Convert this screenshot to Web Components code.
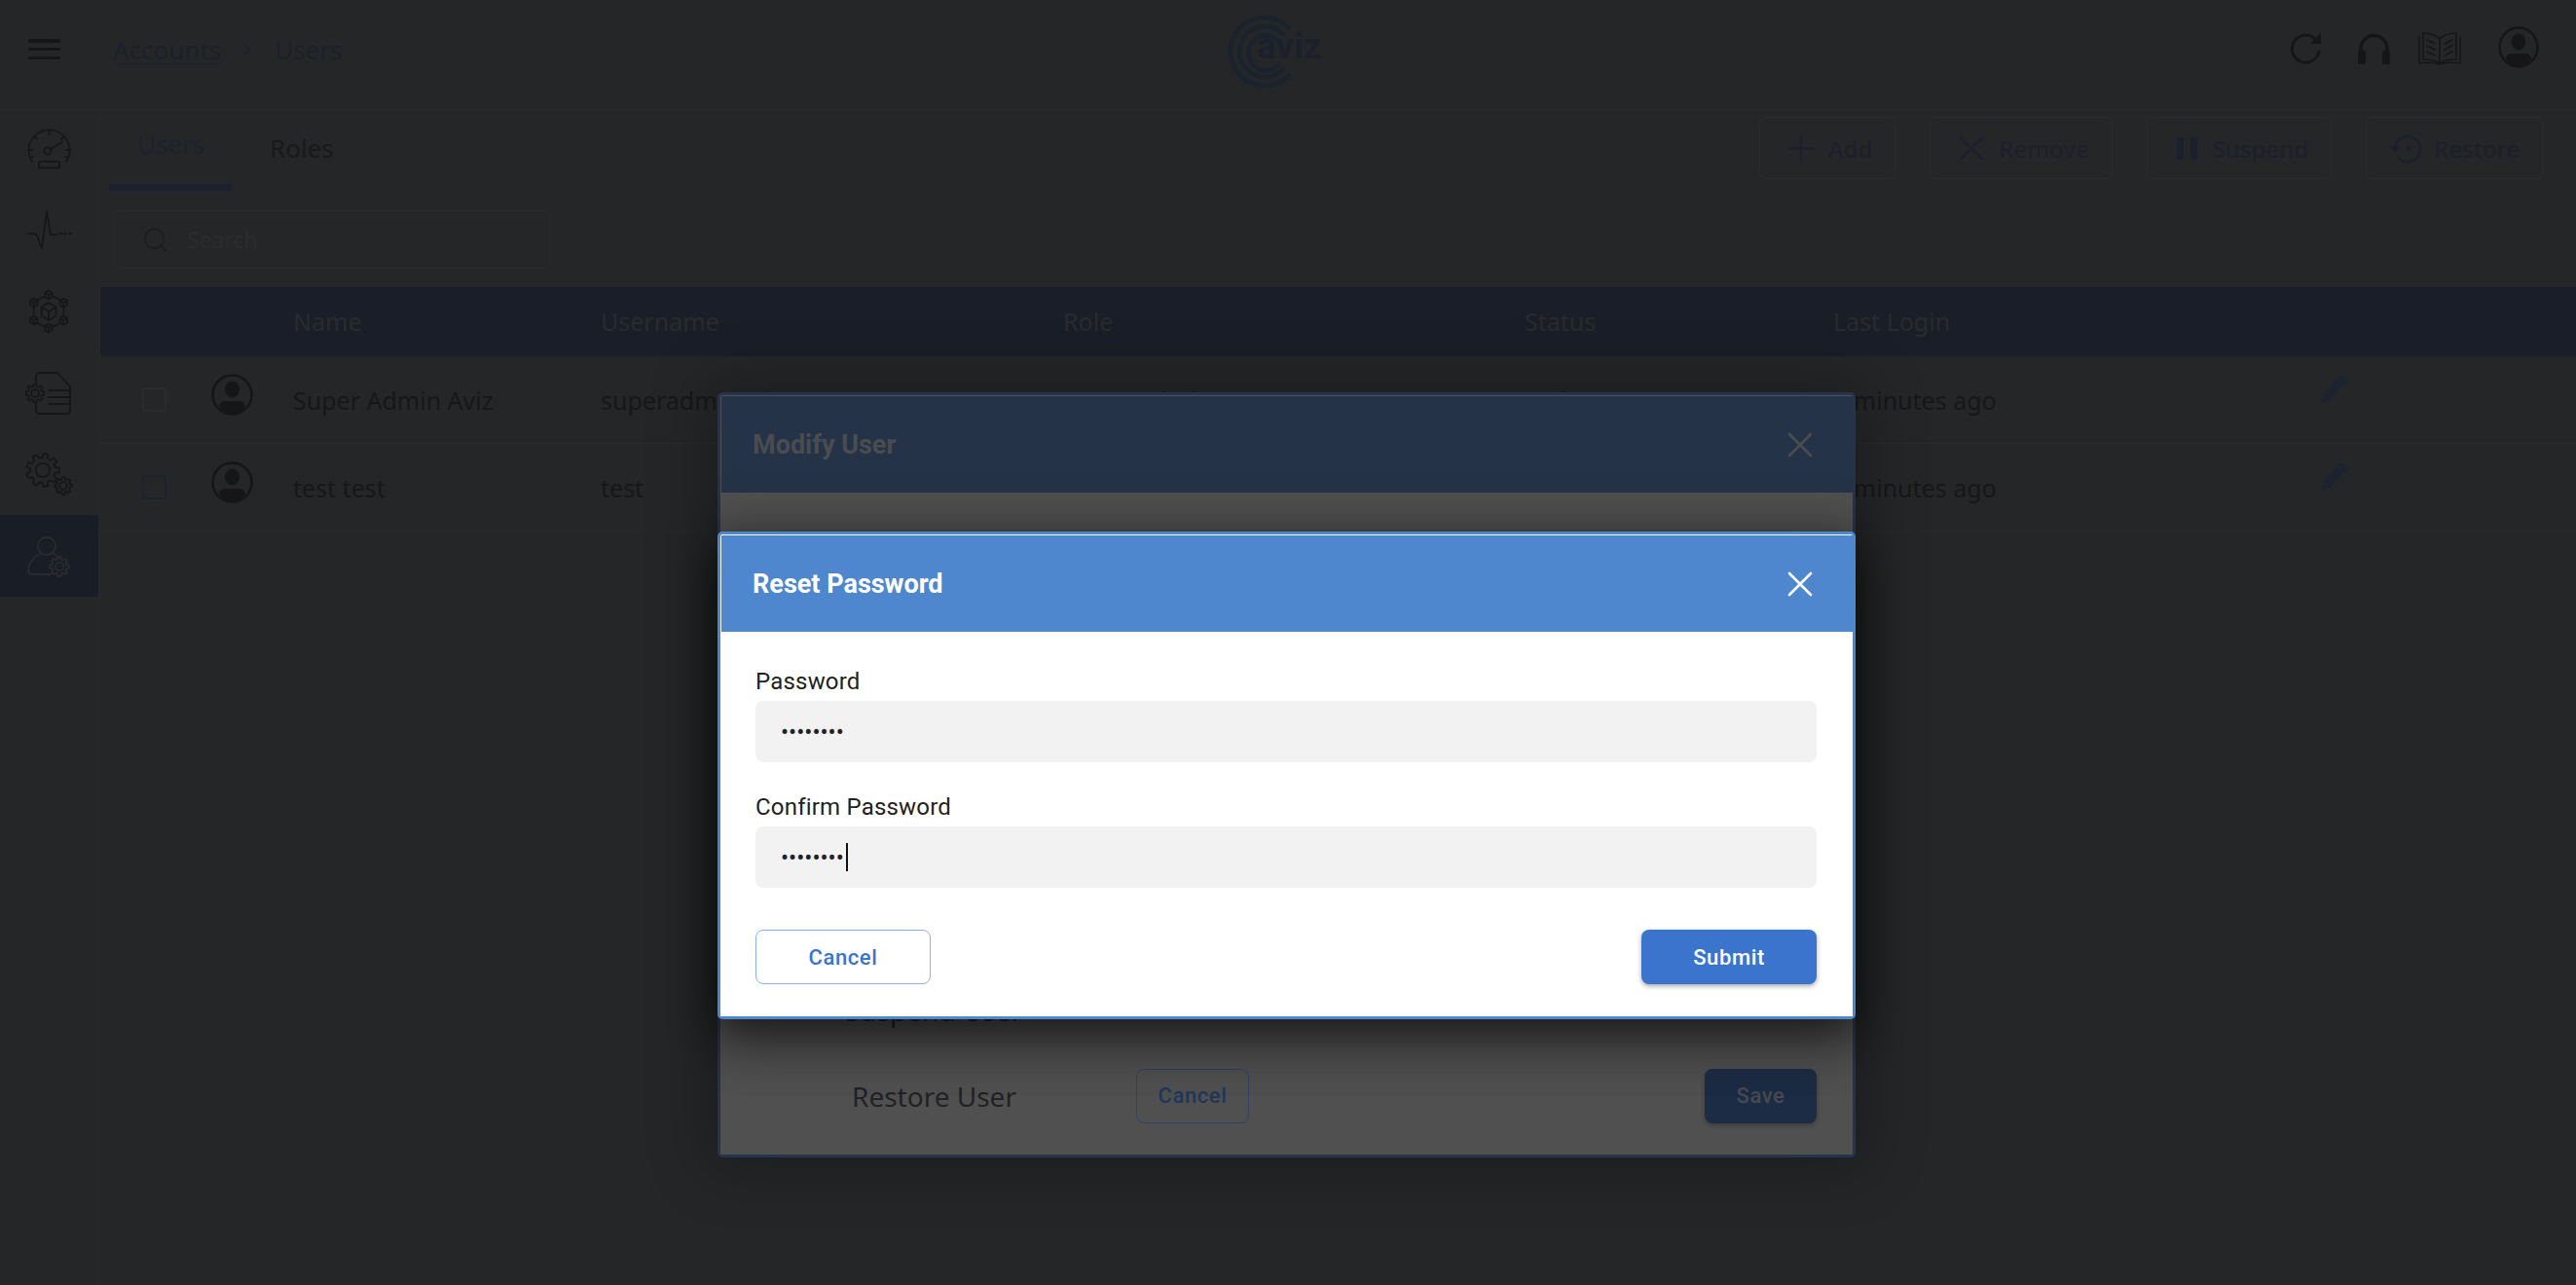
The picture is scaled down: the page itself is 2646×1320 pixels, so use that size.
<!DOCTYPE html>
<html lang="en">
<head>
<meta charset="utf-8">
<title>Accounts / Users</title>
<style>
  html, body { margin: 0; height: 100%; background: #252627; overflow: hidden; }
</style>
</head>
<body>
<app-shell>
  <app-topbar slot="top"></app-topbar>
  <app-sidebar slot="side"></app-sidebar>
  <users-page slot="main"></users-page>
</app-shell>

<!-- first dialog, sitting under the second backdrop -->
<app-modal top="403" dim>
  <span slot="title">Modify User</span>
  <modify-user-form></modify-user-form>
</app-modal>

<app-modal top="546">
  <span slot="title">Reset Password</span>
  <reset-password-form></reset-password-form>
</app-modal>

<script>
// ---- icons ----
const gearPath = (cx, cy, R, r, n) => {
  let pts = [];
  const step = (Math.PI * 2) / n;
  for (let i = 0; i < n; i++) {
    const a = i * step;
    [[-0.32, r], [-0.2, R], [0.2, R], [0.32, r]].forEach(([k, rad]) => {
      const t = a + k * step;
      pts.push(`${(cx + rad * Math.cos(t)).toFixed(2)} ${(cy + rad * Math.sin(t)).toFixed(2)}`);
    });
  }
  return `M${pts.join("L")}Z`;
};
const gear = (cx, cy, R, n = 8) =>
  `<path d="${gearPath(cx, cy, R, R * 0.76, n)}"/><circle cx="${cx}" cy="${cy}" r="${R * 0.42}"/>`;
const cube = (cx, cy, r) => {
  const x = r * 0.87, y = r * 0.5;
  return `<path d="M${cx} ${cy - r}l${x} ${y}v${r}l${-x} ${y}l${-x} ${-y}v${-r}zM${cx - x} ${cy - y}l${x} ${y}l${x} ${-y}M${cx} ${cy}v${r}"/>`;
};

const ICONS = {
  gauge: ["0 0 45 40", `<path d="M5 33A21 21 0 1 1 40 33"/><path d="M22.5 1v4M7 7l3 3M38 7l-3 3M1 21h4M44 21h-4M3 29l3-1M42 29l-3-1"/><circle cx="21" cy="22" r="3.5"/><path d="M24 20l12-7"/><rect x="12" y="33" width="21" height="6.5" rx="1"/>`],
  pulse: ["0 0 45 41", `<path d="M0 24h7l3 2 5 13 5-38 4 24h6"/><path d="M33 24h3M38 24h2M43 24h2"/>`],
  network: ["0 0 44 44", `${cube(22, 22, 9)}${cube(22, 5, 4.5)}${cube(22, 39, 4.5)}${cube(6, 13, 4.5)}${cube(38, 13, 4.5)}${cube(6, 31, 4.5)}${cube(38, 31, 4.5)}<path d="M10 10l8-4M34 10l-8-4M6 18v8M38 18v8M10 34l8 4M34 34l-8 4"/>`],
  filegear: ["0 0 48 44", `<path d="M11 11V5q0-4 4-4h18l13 14v25q0 3-3 3H16q-4 0-5-3v-7"/><path d="M24 19h21M24 26h21M24 33h21"/>${gear(10, 22, 9.5)}`],
  gears: ["0 0 48 43", `${gear(18, 18, 17, 9)}${gear(39, 34, 9)}`],
  usergear: ["0 0 44 42", `<circle cx="20" cy="10" r="9"/><path d="M13 18c-8 4-12 11-12 17 0 3 2 4 4 4h19M27 18c2 1 4 2 5 4"/>${gear(33, 31, 10)}`],
  refresh: ["0 0 33 33", `<path d="M29 20a14 14 0 1 1-4-13" stroke-width="3"/><path d="M31 0v12H20z" fill="currentColor" stroke="none"/>`],
  phones: ["0 0 33 32", `<path d="M3 22v-6a13.5 13.5 0 0 1 27 0v6" stroke-width="3.5"/><rect x="0" y="18" width="8" height="14" rx="2" fill="currentColor" stroke="none"/><rect x="25" y="18" width="8" height="14" rx="2" fill="currentColor" stroke="none"/>`],
  book: ["0 0 44 34", `<path d="M22 7C17 2 11 1 5 1v27c7 0 13 1 17 4 4-3 10-4 17-4V1c-6 0-12 1-17 6v25"/><path d="M1 5v27c8-1 15-1 21 1 6-2 13-2 21-1V5"/><path d="M9 8l8 4M9 14l8 4M9 20l8 4M35 8l-8 4M35 14l-8 4M35 20l-8 4"/>`],
  avatar: ["0 0 43 43", `<circle cx="21.5" cy="21.5" r="20" stroke-width="2.6"/><ellipse cx="21.5" cy="16" rx="7.5" ry="8.5" fill="currentColor" stroke="none"/><path d="M8 33q1-5 7-5h13q6 0 7 5-5 8-13.5 8T8 33z" fill="currentColor" stroke="none"/>`],
  pencil: ["0 0 29 28", `<path d="M0 28l2-8L16 3l7 5L9 25z" fill="currentColor" stroke="none"/><path d="M18 1.5q2-2 4.5-1t5 3.500q1.500 2-.5 4.500l-2 2z" fill="currentColor" stroke="none"/>`],
  plus: ["0 0 24 24", `<path d="M12 0v24M0 12h24" stroke-width="2.4"/>`],
  close: ["0 0 24 24", `<path d="M1 1l22 22M23 1L1 23" stroke-width="2.6"/>`],
  pause: ["0 0 21 23", `<rect x="0" width="7" height="23" fill="currentColor" stroke="none"/><rect x="14" width="7" height="23" fill="currentColor" stroke="none"/>`],
  restore: ["0 0 34 29", `<path d="M6 14.500a13 13 0 1 1 4 10" stroke-width="2.6"/><path d="M0 12h12l-6 7z" fill="currentColor" stroke="none"/><circle cx="20" cy="14.500" r="2.500" fill="currentColor" stroke="none"/>`],
  search: ["0 0 24 24", `<circle cx="11" cy="11" r="10"/><path d="M19 19l4 5"/>`],
  chevron: ["0 0 10 12", `<path d="M2 1l5 5-5 5"/>`],
  doc: ["0 0 40 50", `<path d="M1 49V1h26l12 12v36z"/><path d="M27 1v12h12"/>`],
};

class AppIcon extends HTMLElement {
  connectedCallback() {
    const [box, body] = ICONS[this.getAttribute("name")];
    const w = this.getAttribute("w") || 24;
    const h = this.getAttribute("h") || w;
    const sw = this.getAttribute("sw") || 2;
    this.attachShadow({ mode: "open" }).innerHTML = `
      <style>
        :host { display: block; width: ${w}px; height: ${h}px; flex: none; }
        svg { display: block; width: 100%; height: 100%; overflow: visible; }
      </style>
      <svg viewBox="${box}" preserveAspectRatio="none" fill="none" stroke="currentColor"
        stroke-width="${sw}" stroke-linecap="round" stroke-linejoin="round">${body}</svg>`;
  }
}
customElements.define("app-icon", AppIcon);

// ---- page frame ----
class AppShell extends HTMLElement {
  constructor() {
    super();
    this.attachShadow({ mode: "open" }).innerHTML = `
      <style>
        :host {
          display: grid;
          grid-template-columns: 103px 1fr;
          grid-template-rows: 113px 1fr;
          height: 100vh;
          font-family: "Noto Sans", sans-serif;
        }
        ::slotted([slot="top"]) { grid-column: 1 / 3; }
      </style>
      <slot name="top"></slot>
      <slot name="side"></slot>
      <slot name="main"></slot>`;
  }
}
customElements.define("app-shell", AppShell);

class AppTopbar extends HTMLElement {
  constructor() {
    super();
    this.attachShadow({ mode: "open" }).innerHTML = `
      <style>
        :host {
          display: grid;
          grid-template-columns: 1fr auto 1fr;
          height: 113px;
          box-sizing: border-box;
          border-bottom: 1px solid #28292a;
        }
        .left { display: flex; align-items: flex-start; padding: 40px 0 0 29px; color: #161618; }
        .crumbs {
          display: flex; align-items: center; height: 21px;
          margin-left: 54px;
          font-size: 26px; color: #1b202b; gap: 23px;
        }
        .crumbs a { border-bottom: 1px solid #221f2c; line-height: 28px; margin-top: 2px; }
        .crumbs span { line-height: 28px; }
        .burger { width: 33px; height: 21px; display: flex; flex-direction: column; justify-content: space-between; }
        .burger i { display: block; height: 3.500px; background: #161618; }
        .logo { position: relative; width: 90px; height: 76px; margin: 15px 0 0 -34px; color: #1a222e; }
        .logo svg { display: block; width: 76px; height: 76px; }
        .logo b {
          position: absolute; left: 30px; top: 11px;
          font: 700 36px/44px Roboto, sans-serif; letter-spacing: .5px; color: #1b202c;
        }
        .right { display: flex; justify-content: flex-end; align-items: flex-start; color: #161618; padding: 27px 38px 0 0; }
      </style>
      <div class="left">
        <div class="burger"><i></i><i></i><i></i></div>
        <div class="crumbs"><a>Accounts</a><app-icon name="chevron" w="9" h="11" sw="1.500"></app-icon><span>Users</span></div>
      </div>
      <div class="logo">
        <svg viewBox="0 0 76 76" fill="none" stroke="currentColor" stroke-width="4.500" stroke-linecap="round">
          <path d="M63 13.500A35 35 0 1 0 63 62.500"/>
          <path d="M57 20A26 26 0 1 0 57 56"/>
          <path d="M50 25A18 18 0 1 0 53 51"/>
        </svg>
        <b>aviz</b>
      </div>
      <div class="right">
        <app-icon name="refresh" w="33" h="33" style="margin:6px 36px 0 0"></app-icon>
        <app-icon name="phones" w="33" h="32" style="margin:7px 29px 0 0"></app-icon>
        <app-icon name="book" w="44" h="34" style="margin:6px 38px 0 0" sw="1.500"></app-icon>
        <app-icon name="avatar" w="42" h="43"></app-icon>
      </div>`;
  }
}
customElements.define("app-topbar", AppTopbar);

class AppSidebar extends HTMLElement {
  constructor() {
    super();
    const items = [
      ["gauge", 45, 40, 20],
      ["pulse", 45, 41, 43],
      ["network", 42, 44, 41],
      ["filegear", 48, 44, 40],
      ["gears", 48, 43, 39],
    ];
    this.attachShadow({ mode: "open" }).innerHTML = `
      <style>
        :host {
          display: block;
          box-sizing: border-box;
          border-right: 1px solid #28292a;
          color: #17171a;
        }
        app-icon { margin-left: auto; margin-right: auto; position: relative; left: -1px; }
        .active { height: 84px; width: 101px; margin-top: 21px; background: #191d26; color: #2a2b2d; padding-top: 22px; box-sizing: border-box; }
      </style>
      ${items.map(([n, w, h, gap]) =>
        `<app-icon name="${n}" w="${w}" h="${h}" style="margin-top:${gap}px" sw="1.800"></app-icon>`).join("")}
      <div class="active"><app-icon name="usergear" w="44" h="42" sw="1.800"></app-icon></div>`;
  }
}
customElements.define("app-sidebar", AppSidebar);

// ---- users page ----
class ToolButton extends HTMLElement {
  constructor() {
    super();
    this.attachShadow({ mode: "open" }).innerHTML = `
      <style>
        :host {
          display: inline-flex; align-items: center; gap: 16px;
          box-sizing: border-box; height: 64px;
          padding: 0 23px 0 30px;
          border: 1px solid #2b2c2d; border-radius: 7px;
          font: 500 24px "Noto Sans", sans-serif; color: #1b202c;
        }
      </style>
      <slot name="icon"></slot><slot></slot>`;
  }
}
customElements.define("tool-button", ToolButton);

class UsersPage extends HTMLElement {
  constructor() {
    super();
    this.attachShadow({ mode: "open" }).innerHTML = `
      <style>
        :host { display: block; }
        .bar { display: flex; justify-content: space-between; height: 83px; padding: 0 34px 0 9px; }
        .tabs { display: flex; gap: 39px; font-size: 26px; }
        .tab { height: 83px; box-sizing: border-box; color: #18191b; line-height: 34px; }
        .tab.on { padding: 18px 29px 0; color: #1b2230; border-bottom: 7px solid #1a202d; width: 126px; white-space: nowrap; }
        .tab.off { padding-top: 22px; }
        .tools { display: flex; gap: 35px; padding-top: 7px; color: #1b202c; }
        .search {
          display: flex; align-items: center; gap: 21px;
          width: 449px; height: 60px; box-sizing: border-box;
          margin: 20px 0 19px 14px; padding-left: 30px;
          border: 1px solid #2a2b2c; border-radius: 7px;
          font-size: 23px; color: #2b2c2e;
        }
        .search app-icon { color: #1b1c1e; }
      </style>
      <div class="bar">
        <div class="tabs">
          <div class="tab on">Users</div>
          <div class="tab off">Roles</div>
        </div>
        <div class="tools">
          <tool-button><app-icon slot="icon" name="plus" w="24" h="23"></app-icon>Add</tool-button>
          <tool-button><app-icon slot="icon" name="close" w="24" h="23"></app-icon>Remove</tool-button>
          <tool-button><app-icon slot="icon" name="pause" w="21" h="23"></app-icon>Suspend</tool-button>
          <tool-button style="padding-left:23px;gap:12px"><app-icon slot="icon" name="restore" w="34" h="29"></app-icon>Restore</tool-button>
        </div>
      </div>
      <div class="search"><app-icon name="search" w="23" h="24" sw="1.500"></app-icon><span>Search</span></div>
      <users-table></users-table>`;
  }
}
customElements.define("users-page", UsersPage);

class UsersTable extends HTMLElement {
  constructor() {
    super();
    const cols = "71px 84px 316px 475px 474px 317px 501px 1fr";
    const rows = [
      ["Super Admin Aviz", "superadmin", "Super Admin", "Active", "3 minutes ago", "#2a2b2c"],
      ["test test", "test", "Admin", "Active", "3 minutes ago", "#1b2330"],
    ];
    this.attachShadow({ mode: "open" }).innerHTML = `
      <style>
        :host { display: block; font-size: 25px; }
        .head, .row { display: grid; grid-template-columns: ${cols}; padding-left: 43px; align-items: center; }
        .head { height: 71px; background: #1a1e28; color: #2a2b2d; padding-bottom: 2px; box-sizing: border-box; }
        .row { height: 90px; color: #171719; border-bottom: 1px solid #28292a; box-sizing: border-box; }
        .box { width: 25px; height: 25px; box-sizing: border-box; border: 2px solid; border-radius: 3px; }
        .av { align-self: start; margin-top: 18px; color: #161618; }
        .pen { align-self: start; margin-top: 20px; color: #1b2230; }
      </style>
      <div class="head"><span></span><span></span><span>Name</span><span>Username</span><span>Role</span><span>Status</span><span>Last Login</span><span></span></div>
      ${rows.map(([name, user, role, status, last, box]) => `
        <div class="row">
          <div class="box" style="color:${box}"></div>
          <app-icon class="av" name="avatar" w="43" h="43"></app-icon>
          <span>${name}</span><span>${user}</span><span>${role}</span><span>${status}</span><span>${last}</span>
          <app-icon class="pen" name="pencil" w="29" h="28"></app-icon>
        </div>`).join("")}`;
  }
}
customElements.define("users-table", UsersTable);

// ---- dialogs ----
class AppModal extends HTMLElement {
  constructor() {
    super();
    this.attachShadow({ mode: "open" }).innerHTML = `
      <style>
        :host {
          position: fixed; inset: 0;
          display: flex; align-items: flex-start; justify-content: flex-start;
          padding-left: 737px;
          font-family: Roboto, sans-serif;
          --frame: #4d87cc; --line: #fff; --bar: #4e87cd; --bar-ink: #fff; --body: #fff;
          --shadow: 0 11px 30px -7px rgba(0,0,0,.35), 0 24px 50px 3px rgba(0,0,0,.3), 0 9px 60px 8px rgba(0,0,0,.3);
        }
        :host([dim]) {
          --frame: #24344d; --line: #515152; --bar: #243347; --bar-ink: #4b4c4f; --body: #505051;
          --shadow: 0 0 60px 12px rgba(0,0,0,.25);
        }
        .dialog {
          width: 1169px; box-sizing: border-box;
          border: 3px solid var(--frame); border-radius: 5px;
          background: var(--line);
          padding: 1px 1px 0;
          box-shadow: var(--shadow);
        }
        header {
          display: flex; justify-content: space-between; align-items: center;
          height: 99px; box-sizing: border-box; padding: 0 42px 0 32px;
          margin: 0 -1px; margin-left: 0;
          background: var(--bar); color: var(--bar-ink);
          font-size: 27px; font-weight: 700;
        }
        .body { background: var(--body); margin: 0 -1px; }
      </style>
      <div class="dialog">
        <header>
          <slot name="title"></slot>
          <app-icon name="close" w="24" h="24" sw="2.800"></app-icon>
        </header>
        <div class="body"><slot></slot></div>
      </div>`;
  }
  connectedCallback() {
    this.style.paddingTop = `${this.getAttribute("top")}px`;
  }
}
customElements.define("app-modal", AppModal);

class AppButton extends HTMLElement {
  constructor() {
    super();
    this.attachShadow({ mode: "open" }).innerHTML = `
      <style>
        :host {
          display: inline-flex; align-items: center; justify-content: center;
          box-sizing: border-box; height: 56px; width: 180px;
          border-radius: 8px;
          font: 500 22px Roboto, sans-serif; letter-spacing: .6px;
        }
        :host([kind="outline"]) { border: 1px solid #8fb1e6; color: #3a74cc; background: #fff; }
        :host([kind="solid"]) { background: #3a74cc; color: #fff; box-shadow: 0 2px 5px rgba(0,0,0,.35); }
        :host([kind="outline-dim"]) { border: 1px solid #2f4361; color: #21375a; width: 116px; }
        :host([kind="solid-dim"]) { background: #1d2c45; color: #474b50; width: 115px; box-shadow: 0 2px 5px rgba(0,0,0,.25); }
      </style>
      <slot></slot>`;
  }
}
customElements.define("app-button", AppButton);

class PasswordField extends HTMLElement {
  constructor() {
    super();
    this.attachShadow({ mode: "open" }).innerHTML = `
      <style>
        :host { display: block; position: relative; color: #222; }
        label { display: block; font-size: 24px; line-height: 34px; letter-spacing: .2px; margin-bottom: 3px; }
        input {
          display: block; width: 100%; height: 63px; box-sizing: border-box;
          padding: 0 26px; border: 0; outline: 0; border-radius: 8px;
          background: #f2f2f2; color: #222;
          font: 24px Roboto, sans-serif;
        }
        .caret { display: none; position: absolute; left: 93px; top: 54px; width: 2px; height: 29px; background: #111; }
        :host([caret]) .caret { display: block; }
      </style>
      <label></label>
      <input type="password" value="12345678" readonly>
      <div class="caret"></div>`;
  }
  connectedCallback() {
    this.shadowRoot.querySelector("label").textContent = this.getAttribute("label");
  }
}
customElements.define("password-field", PasswordField);

class ResetPasswordForm extends HTMLElement {
  constructor() {
    super();
    this.attachShadow({ mode: "open" }).innerHTML = `
      <style>
        :host { display: block; padding: 34px 37px 33px 36px; }
        password-field + password-field { margin-top: 29px; }
        .actions { display: flex; justify-content: space-between; margin-top: 43px; }
      </style>
      <password-field label="Password"></password-field>
      <password-field label="Confirm Password" caret></password-field>
      <div class="actions">
        <app-button kind="outline">Cancel</app-button>
        <app-button kind="solid">Submit</app-button>
      </div>`;
  }
}
customElements.define("reset-password-form", ResetPasswordForm);

class ModifyUserForm extends HTMLElement {
  constructor() {
    super();
    this.attachShadow({ mode: "open" }).innerHTML = `
      <style>
        :host {
          display: flex; flex-direction: column; height: 680px; box-sizing: border-box;
          padding: 57px 37px 33px 36px;
          font: 28px "Noto Sans", sans-serif; color: #222224;
        }
        .doc { color: #3b3b3c; margin-left: 73px; }
        .suspend { margin: auto 0 0 92px; line-height: 38px; }
        .restore { display: flex; align-items: center; height: 55px; margin-top: 41px; }
        .restore span { width: 292px; padding-left: 99px; box-sizing: border-box; width: 391px; }
        .restore app-button:last-child { margin-left: auto; }
      </style>
      <app-icon class="doc" name="doc" w="34" h="42"></app-icon>
      <div class="suspend">Suspend User</div>
      <div class="restore">
        <span>Restore User</span>
        <app-button kind="outline-dim">Cancel</app-button>
        <app-button kind="solid-dim">Save</app-button>
      </div>`;
  }
}
customElements.define("modify-user-form", ModifyUserForm);
</script>
</body>
</html>
